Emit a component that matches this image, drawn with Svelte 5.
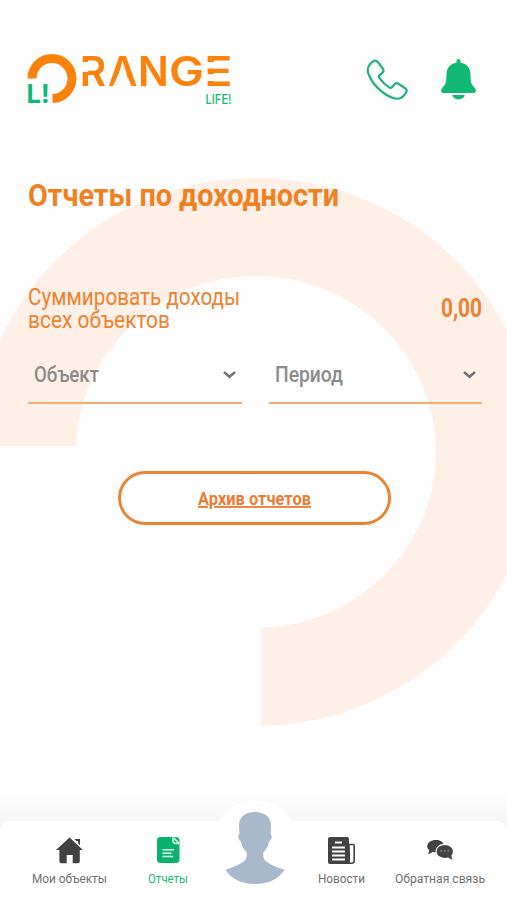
<script>
  const selects = [
    { label: 'Объект', width: 65 },
    { label: 'Период', width: 68 }
  ];
  const tabs = [
    { icon: 'home', label: 'Мои объекты', width: 75, box: 138 },
    { icon: 'report', label: 'Отчеты', width: 40, box: 60, active: true },
    { icon: 'avatar', box: 114 },
    { icon: 'news', label: 'Новости', width: 47, box: 58 },
    { icon: 'chat', label: 'Обратная связь', width: 90, box: 137 }
  ];
</script>

{#snippet label(text, width, height, size, weight)}
  <svg class="label" {width} {height} font-size={size} font-weight={weight}>
    <text x="0" y={height} textLength={width} lengthAdjust="spacingAndGlyphs">{text}</text>
  </svg>
{/snippet}

<div class="screen">
  <svg class="watermark" width="507" height="900" viewBox="0 0 507 900">
    <path fill="#fff0e7" d="M-24 446A280 274 0 1 1 261 726V628A180 176 0 1 0 76 446Z" />
  </svg>

  <header>
    <svg class="logo" width="206" height="52" viewBox="0 0 206 52">
      <defs>
        <mask id="cuts" maskUnits="userSpaceOnUse" x="50" y="0" width="156" height="40">
          <rect x="50" width="156" height="40" fill="#fff" />
          <rect x="52" y="8" width="9.2" height="10" fill="#000" />
          <path d="M85.2 34L95.3 11.5L105.4 34Z" fill="#000" />
          <rect x="178" y="8.2" width="10" height="6.3" fill="#000" />
          <rect x="178" y="20.3" width="10" height="6.7" fill="#000" />
        </mask>
      </defs>
      <path d="M5 24.5A20 20 0 1 1 25.5 44.5" fill="none" stroke="#fb820b" stroke-width="9" />
      <g mask="url(#cuts)">
        <text class="brand" x="52.7 81 111" y="32.3">RAN</text>
        <text class="brand" x="0 30.6" transform="translate(142 32.3) scale(1.15 1)">GE</text>
      </g>
      <text class="li" x="-.5 14" y="49.3">L!</text>
      <text class="life" x="178.5" y="49.5" textLength="26" lengthAdjust="spacingAndGlyphs">LIFE!</text>
    </svg>
    <div class="actions">
      <svg width="42" height="42" viewBox="0 0 42 42" fill="none" stroke="#20b37d" stroke-width="2.2" stroke-linejoin="round">
        <path d="M3.1 6.6C4.6 4.2 7 2 9 1.7C10.8 1.5 12 3 13 4.4L17 10C18 11.6 17.5 13 16 14.2L13.4 16.4C12.6 17.2 12.8 18.2 13.5 19.2C16.2 23 19.7 26.4 23.2 28.4C24.4 29.2 25.4 29 26.2 28L28.6 25.1C29.6 24 31 23.9 32.4 24.8L38.8 29C40.6 30.2 41.2 31.7 40.2 33.4C38.7 36 35.7 38.9 33.2 39.5C29.5 40.5 23.5 38.3 17 33.5C10.3 28.5 5.2 22 2.7 15.5C1.3 12 1.3 9.3 3.1 6.6Z" />
      </svg>
      <svg width="35" height="41" viewBox="0 0 35 41" fill="#10b873">
        <path d="M17.5 0C18.7 0 19.5.8 19.5 2V3.7C26 4.7 29.3 9.2 29.5 15L29.8 21C30 24.2 31 25.8 33.2 28.2C34.7 29.9 35.2 31 34.8 32.2C34.5 33.4 33.7 34 32.3 34H2.7C1.3 34 .5 33.4.2 32.2C-.2 31 .3 29.9 1.8 28.2C4 25.8 5 24.2 5.2 21L5.5 15C5.7 9.2 9 4.7 15.5 3.7V2C15.5.8 16.3 0 17.5 0Z" />
        <path d="M11.2 36H23.8C23 38.9 20.6 40.4 17.5 40.4S12 38.9 11.2 36Z" />
      </svg>
    </div>
  </header>

  <main>
    <h1>{@render label('Отчеты по доходности', 311, 24, 31, 700)}</h1>

    <section class="summary">
      <div class="caption">
        {@render label('Суммировать доходы', 212, 18, 24, 400)}
        {@render label('всех объектов', 142, 18, 24, 400)}
      </div>
      <div class="total">{@render label('0,00', 41, 19, 26, 700)}</div>
    </section>

    <section class="filters">
      {#each selects as s}
        <div class="select">
          {@render label(s.label, s.width, 16, 22, 500)}
          <svg width="13" height="8" viewBox="0 0 13 8" fill="none" stroke="#747474" stroke-width="2.4">
            <path d="M1 1L6.5 6L12 1" />
          </svg>
        </div>
      {/each}
    </section>

    <button class="archive">{@render label('Архив отчетов', 113, 14, 18.5, 700)}</button>
  </main>

  <div class="shade"></div>
  <nav>
    {#each tabs as t}
      <div class="tab {t.icon}" class:active={t.active} style:width="{t.box}px">
        {#if t.icon === 'home'}
          <svg class="icon" width="27" height="27" viewBox="0 0 27 27" fill="#424242">
            <path d="M13.5.5L27 13H23.8V24.5Q23.8 26.2 22 26.2H16.7V18H10.7V26.2H5.2Q3.4 26.2 3.4 24.5V13H0Z" />
            <path d="M18.5 2H24V8.2L22.2 6.5V4H20.2Z" />
          </svg>
        {:else if t.icon === 'report'}
          <svg class="icon" width="23" height="27" viewBox="0 0 23 27">
            <path fill="#08b46b" d="M3.5 0H19Q22.5 0 22.5 3.5V22.7Q22.5 26 19 26H3.5Q0 26 0 22.7V3.5Q0 0 3.5 0Z" />
            <path fill="none" stroke="#e9fff5" stroke-width="1.5" d="M16 .5V3.5Q16 6.5 19 6.5H22M16.5.8L22 6.2M5.5 12.7H17M5.5 16.2H14.5M5.5 19.5H16" />
          </svg>
        {:else if t.icon === 'avatar'}
          <div class="bump">
            <svg width="60" height="73" viewBox="0 0 60 73" fill="#a8b9cb">
              <path d="M30 0C40.5 0 46 5.4 46 13.5L45.6 22C47.5 23 46.7 28.5 44.2 29.2C43.2 34 41 37.8 38.3 40.5V44.2C38.8 51 50 54.3 59.5 57.7C54 66.7 43.5 72 30 72S6 66.7.5 57.7C10 54.3 21.2 51 21.7 44.2V40.5C19 37.8 16.8 34 15.8 29.2C13.3 28.5 12.5 23 14.4 22L14 13.5C14 5.4 19.5 0 30 0Z" />
            </svg>
          </div>
        {:else if t.icon === 'news'}
          <svg class="icon" width="27" height="27" viewBox="0 0 27 27">
            <path fill="#424242" d="M2 0H19Q21 0 21 2V27H2Q0 27 0 25V2Q0 0 2 0Z" />
            <path fill="#fff" stroke="#424242" stroke-width="1.6" d="M21 7.5H25Q26.2 7.5 26.2 9V23.5Q26.2 26.2 23.7 26.2H20.5Q21.3 25 21.3 23.5Z" />
            <path fill="none" stroke="#fff" stroke-width="2" d="M7 5.5H14M4 10.5H17M4 14.5H17M4 18.5H17M4 22.5H17" />
          </svg>
        {:else}
          <svg class="icon" width="27" height="27" viewBox="0 0 27 27">
            <path fill="#424242" d="M9 3C14 3 17 5.7 17 9.2S14 15.4 9 15.4L5.5 15C4.2 16.2 2.4 16.9.8 17C1.8 15.8 2.3 14.4 2 13C.8 12 .2 10.8.2 9.2C.2 5.7 4 3 9 3Z" />
            <path fill="#424242" stroke="#fff" stroke-width="1.2" d="M17.7 7.4C23 7.4 26.5 10.5 26.5 14.4C26.5 16.2 26 17.6 24.9 18.6C24.9 20.4 25.8 22 26.8 23.4C24.5 23.4 22.4 22.4 21.2 21.2C14.5 22.4 9 19.4 9 14.4C9 10.5 12.5 7.4 17.7 7.4Z" />
            <path stroke="#999" stroke-width="1.2" stroke-dasharray="1.5 2" d="M13.5 13.8H22.5" />
          </svg>
        {/if}
        {#if t.label}
          {@render label(t.label, t.width, 10, 13, 400)}
        {/if}
      </div>
    {/each}
  </nav>
</div>

<style>
  :global(body) { margin: 0; }
  .screen {
    position: relative;
    box-sizing: border-box;
    width: 507px;
    height: 900px;
    overflow: hidden;
    display: flex;
    flex-direction: column;
    background: #fdfdfd;
    color: #ed8230;
    font-family: Roboto, "Liberation Sans", sans-serif;
  }
  .watermark { position: absolute; inset: 0; }
  .label { display: block; overflow: visible; fill: currentColor; }
  header, main, nav, .shade { position: relative; }
  header {
    display: flex;
    justify-content: space-between;
    align-items: flex-start;
    padding: 54px 31px 0 27px;
  }
  .logo { overflow: visible; }
  .brand { font: 600 40.5px Inter, sans-serif; fill: #fb820b; }
  .li { font: 700 25.5px Inter, sans-serif; fill: #12b57b; }
  .life { font: 500 13px Inter, sans-serif; fill: #12b57b; }
  .actions { display: flex; gap: 33px; padding-top: 5px; }
  main { flex: 1; padding: 76px 25px 0 28px; }
  h1 { margin: 0; color: #f08122; }
  .summary {
    display: flex;
    justify-content: space-between;
    margin-top: 81px;
  }
  .caption { display: flex; flex-direction: column; gap: 5px; }
  .total { padding-top: 11px; }
  .filters { display: flex; gap: 27px; margin-top: 29px; }
  .select {
    flex: 1;
    box-sizing: border-box;
    height: 47px;
    display: flex;
    justify-content: space-between;
    align-items: flex-start;
    padding: 9px 6px 0;
    border-bottom: 2px solid #f4ad75;
    color: #8c8c8c;
  }
  .select > svg:last-child { margin-top: 5px; }
  .archive {
    display: flex;
    justify-content: center;
    box-sizing: border-box;
    width: 273px;
    height: 54px;
    margin: 67px 0 0 90px;
    padding: 17px 0 0;
    border: 3px solid #e98532;
    border-radius: 27px;
    background: #fff;
    color: #ed7c36;
    font-family: inherit;
  }
  .archive :global(text) {
    text-decoration: underline;
    text-decoration-skip-ink: none;
    text-decoration-thickness: 1.5px;
  }
  .shade { height: 36px; margin-bottom: -10px; background: linear-gradient(#fdfdfd, #f4f4f4); }
  nav {
    height: 79px;
    display: flex;
    justify-content: space-between;
    border-radius: 10px 10px 0 0;
    background: #fff;
    color: #707070;
  }
  .tab {
    box-sizing: border-box;
    display: flex;
    flex-direction: column;
    align-items: center;
    gap: 9px;
    padding-top: 16px;
  }
  .active { color: #1bb67b; }
  .avatar { padding-top: 0; }
  .chat { padding-left: 3px; }
  .bump {
    box-sizing: border-box;
    width: 88px;
    height: 88px;
    margin-top: -20px;
    display: flex;
    justify-content: center;
    padding-top: 11px;
    border-radius: 50%;
    background: #fff;
  }
</style>
